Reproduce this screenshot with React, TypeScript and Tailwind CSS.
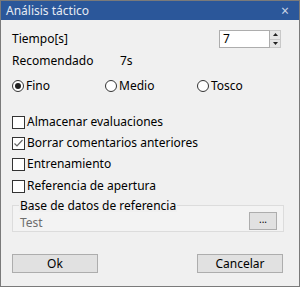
import React from "react";

const font = { fontFamily: '"Segoe UI", "Noto Sans", "Liberation Sans", sans-serif' };

function Radio({ label, checked }: { label: string; checked?: boolean }) {
  return (
    <div className="flex items-center gap-[2px]">
      <span className="w-[12px] h-[12px] rounded-full border border-[#333] bg-white flex items-center justify-center">
        {checked && <span className="w-[6px] h-[6px] rounded-full bg-[#222]" />}
      </span>
      <span>{label}</span>
    </div>
  );
}

function Check({ label, checked }: { label: string; checked?: boolean }) {
  return (
    <div className="flex items-center gap-[2px] h-[18px]">
      <span className="w-[13px] h-[13px] border border-[#333] bg-white flex items-center justify-center">
        {checked && (
          <svg width="11" height="11" viewBox="0 0 11 11">
            <path d="M1.5 5.5 L4 8 L9.5 2" stroke="#666" strokeWidth="1.2" fill="none" />
          </svg>
        )}
      </span>
      <span>{label}</span>
    </div>
  );
}

export default function App() {
  return (
    <div
      style={font}
      className="w-[300px] h-[287px] border border-[#7a7a7a] bg-[#f0f0f0] flex flex-col text-[12px] text-black leading-none overflow-hidden"
    >
      {/* title bar */}
      <div className="h-[19px] bg-[#2b579a] flex items-center justify-between px-[5px] text-[#e6ebf3]">
        <span className="text-[12px]">Análisis táctico</span>
        <span className="text-[14px] text-[#c8d3e6] mr-[5px]">×</span>
      </div>

      <div className="flex flex-col px-[11px]">
        {/* Tiempo */}
        <div className="mt-[10px] h-[18px] flex items-center justify-between">
          <span>Tiempo[s]</span>
          <div className="flex h-[18px] mr-[7px]">
            <div className="w-[51px] h-full bg-white border border-[#adadad] flex items-center pl-[3px]">7</div>
            <div className="w-[11px] h-full flex flex-col border-y border-r border-[#c8c8c8]">
              <div className="flex-1 bg-[#e6e6e6] flex items-center justify-center border-b border-[#c8c8c8]">
                <svg width="5" height="3" viewBox="0 0 5 3"><path d="M0 3 L2.5 0 L5 3 Z" fill="#222" /></svg>
              </div>
              <div className="flex-1 bg-[#e6e6e6] flex items-center justify-center">
                <svg width="5" height="3" viewBox="0 0 5 3"><path d="M0 0 L2.5 3 L5 0 Z" fill="#222" /></svg>
              </div>
            </div>
          </div>
        </div>

        {/* Recomendado */}
        <div className="mt-[4px] h-[18px] flex items-center">
          <span className="w-[108px]">Recomendado</span>
          <span>7s</span>
        </div>

        {/* radios */}
        <div className="mt-[7px] h-[18px] flex items-center">
          <div className="w-[93px]"><Radio label="Fino" checked /></div>
          <div className="w-[92px]"><Radio label="Medio" /></div>
          <Radio label="Tosco" />
        </div>

        {/* checks */}
        <div className="mt-[18px] flex flex-col gap-[3px]">
          <Check label="Almacenar evaluaciones" />
          <Check label="Borrar comentarios anteriores" checked />
          <Check label="Entrenamiento" />
          <div className="mt-[1px]"><Check label="Referencia de apertura" /></div>
        </div>

        {/* group box */}
        <div className="mt-[10px] h-[27px] border border-[#dcdcdc] bg-[#f3f3f3] mr-[4px] relative flex items-center justify-between pl-[7px] pr-[6px]">
          <span className="absolute left-[6px] top-[-6px] bg-[#f0f0f0] px-[1px] text-black">Base de datos de referencia</span>
          <span className="text-[#6d6d6d] mt-[8px]">Test</span>
          <button className="w-[28px] h-[18px] mt-[4px] bg-[#e1e1e1] border border-[#adadad] text-[10px] flex items-center justify-center pb-[4px]">...</button>
        </div>

        {/* buttons */}
        <div className="mt-[22px] flex justify-between mr-[5px]">
          <button className="w-[86px] h-[19px] bg-[#e1e1e1] border border-[#adadad]">Ok</button>
          <button className="w-[86px] h-[19px] bg-[#e1e1e1] border border-[#adadad]">Cancelar</button>
        </div>
      </div>
    </div>
  );
}
